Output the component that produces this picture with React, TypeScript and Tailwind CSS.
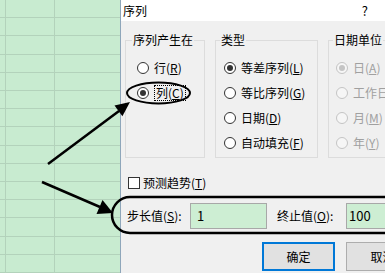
import type { ReactNode } from "react";

const ROWS = Array.from({ length: 16 }, (_, i) => Math.round(18.2 * (i + 1)) - Math.round(18.2 * i));

const Radio = ({
  label,
  accel,
  checked,
  disabled,
  focus,
}: {
  label: string;
  accel: string;
  checked?: boolean;
  disabled?: boolean;
  focus?: boolean;
}) => (
  <div className="flex h-[25px] items-center gap-[5px]">
    <span
      className={`flex h-[12px] w-[12px] shrink-0 items-center justify-center rounded-full border ${
        disabled ? "border-[#c4c4c4] bg-[#f6f6f6]" : "border-[#333] bg-white"
      }`}
    >
      {checked && <span className={`h-[6px] w-[6px] rounded-full ${disabled ? "bg-[#c4c4c4]" : "bg-[#333]"}`} />}
    </span>
    <span
      className={`whitespace-nowrap leading-[14px] ${disabled ? "text-[#a0a0a0]" : "text-black"} ${
        focus ? "border border-dotted border-black px-[1px]" : ""
      }`}
    >
      {label}(<u>{accel}</u>)
    </span>
  </div>
);

const Group = ({
  title,
  width,
  legendClass,
  bodyClass,
  children,
}: {
  title: string;
  width: string;
  legendClass: string;
  bodyClass: string;
  children: ReactNode;
}) => (
  <fieldset className={`${width} shrink-0 border border-[#dcdcdc] p-0`}>
    <legend className={`${legendClass} px-[1px] leading-[14px]`}>{title}</legend>
    <div className={`${bodyClass} pb-[2px] pt-[8px]`}>{children}</div>
  </fieldset>
);

export default function App() {
  return (
    <div className="relative flex h-[273px] w-[385px] overflow-hidden bg-white font-['Noto_Sans_CJK_SC',sans-serif] text-[12px] text-black">
      {/* spreadsheet behind the dialog */}
      <div className="relative flex h-full w-[120px] shrink-0 flex-col bg-[#c8ebd0]">
        {ROWS.map((h, i) => (
          <div key={i} className="flex shrink-0 border-b border-[#b3d2bb]" style={{ height: h }}>
            <div className="w-[6px] border-r border-[#b3d2bb]" />
            <div className="w-[49px] border-r border-[#b3d2bb]" />
            <div className="flex-1" />
          </div>
        ))}
      </div>

      {/* dialog */}
      <div className="flex w-[300px] shrink-0 flex-col border-l border-[#8ea6ba] bg-[#f0f0f0] shadow-[-3px_0_4px_rgba(0,0,0,0.12)]">
        <div className="flex h-[21px] shrink-0 items-center bg-white pl-[2px] pr-[52px]">
          <span>序列</span>
          <span className="ml-auto text-[13px]">?</span>
        </div>

        <div className="mt-[12px] flex gap-[10px] pl-[4px]">
          <Group title="序列产生在" width="w-[80px]" legendClass="ml-[6px]" bodyClass="pl-[11px]">
            <Radio label="行" accel="R" />
            <Radio label="列" accel="C" checked focus />
          </Group>
          <Group title="类型" width="w-[103px]" legendClass="ml-[4px]" bodyClass="pl-[8px]">
            <Radio label="等差序列" accel="L" checked />
            <Radio label="等比序列" accel="G" />
            <Radio label="日期" accel="D" />
            <Radio label="自动填充" accel="F" />
          </Group>
          <Group title="日期单位" width="w-[90px]" legendClass="ml-[4px]" bodyClass="pl-[7px]">
            <Radio label="日" accel="A" checked disabled />
            <Radio label="工作日" accel="W" disabled />
            <Radio label="月" accel="M" disabled />
            <Radio label="年" accel="Y" disabled />
          </Group>
        </div>

        <div className="mt-[15px] flex h-[20px] items-center gap-[3px] pl-[7px]">
          <span className="h-[12px] w-[12px] border border-[#333] bg-white" />
          <span className="leading-[14px]">
            预测趋势(<u>T</u>)
          </span>
        </div>

        <div className="mt-[10px] flex h-[26px] items-center pl-[6px]">
          <span className="w-[63px] shrink-0">
            步长值(<u>S</u>):
          </span>
          <div className="flex h-full w-[77px] shrink-0 items-center border border-[#a8a8a8] bg-[#cdeed3] pl-[6px] text-[13px]">
            1
          </div>
          <span className="ml-[10px] w-[69px] shrink-0">
            终止值(<u>O</u>):
          </span>
          <div className="flex h-full w-[90px] shrink-0 items-center border border-[#a8a8a8] bg-[#cdeed3] pl-[2px] text-[13px]">
            100
          </div>
        </div>

        <div className="mt-[13px] flex gap-[11px] pl-[141px]">
          <button className="h-[29px] w-[73px] border-2 border-[#0078d7] bg-[#e1e1e1] text-[12px]">确定</button>
          <button className="h-[29px] w-[73px] border border-[#adadad] bg-[#e1e1e1] text-[12px]">取消</button>
        </div>
      </div>

      {/* annotations drawn over the screenshot */}
      <svg className="pointer-events-none absolute inset-0" width="385" height="273" viewBox="0 0 385 273">
        <ellipse cx="158.5" cy="93" rx="31.5" ry="10.5" fill="none" stroke="#000" strokeWidth="2" />
        <path d="M400 197 H130 A18 18 0 0 0 130 233 H400" fill="none" stroke="#000" strokeWidth="2.5" />
        <line x1="48" y1="164" x2="119" y2="111" stroke="#000" strokeWidth="2.5" />
        <polygon points="130,102 122.4,116.2 114.5,105.6" fill="#000" />
        <line x1="42" y1="182" x2="100" y2="207" stroke="#000" strokeWidth="2.5" />
        <polygon points="113,213 96.5,214 102.5,200" fill="#000" />
      </svg>
    </div>
  );
}
